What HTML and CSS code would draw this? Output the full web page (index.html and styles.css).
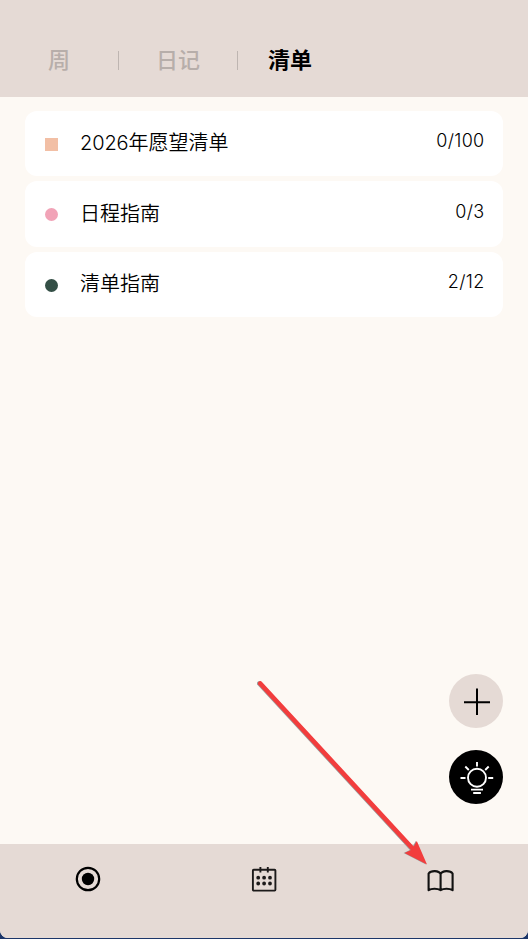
FILE: index.html
```html
<!DOCTYPE html>
<html lang="zh-CN">
<head>
<meta charset="utf-8">
<title>清单</title>
<link rel="stylesheet" href="styles.css">
</head>
<body>
<div class="app">
  <header class="tabs">
    <span class="tab tab-week">周</span>
    <i class="divider"></i>
    <span class="tab tab-diary">日记</span>
    <i class="divider"></i>
    <span class="tab tab-list active">清单</span>
  </header>
  <main class="content">
    <div class="card"><i class="mark square"></i><span class="name"><span class="year">2026</span>年愿望清单</span><span class="count">0/100</span></div>
    <div class="card"><i class="mark pink"></i><span class="name">日程指南</span><span class="count">0/3</span></div>
    <div class="card"><i class="mark green"></i><span class="name">清单指南</span><span class="count">2/12</span></div>
    <div class="actions">
      <button class="fab" aria-label="添加">
        <svg width="54" height="54" viewBox="0 0 54 54" fill="none" stroke="#000" stroke-width="2"><path d="M28 14.500v26.500M15 28.300h26"/></svg>
      </button>
      <button class="fab dark" aria-label="提示">
        <svg width="54" height="54" viewBox="0 0 54 54" fill="none" stroke="#fff" stroke-width="1.900"><circle cx="28" cy="27.700" r="9"/><path d="M28 12v4.500M16.300 16.500l3.500 3.500M39.700 16.500l-3.500 3.500M11.500 28h5M39.200 28h5M22 39.600h12M24.200 43h7.700"/></svg>
      </button>
    </div>
  </main>
  <nav class="bar">
    <a class="item"><svg width="28" height="28" viewBox="0 0 28 28"><circle cx="14" cy="14" r="11.200" fill="none" stroke="#000" stroke-width="2.200"/><circle cx="14" cy="14" r="6.200"/></svg></a>
    <a class="item"><svg width="28" height="28" viewBox="0 0 28 28" fill="none" stroke="#1c1a1a" stroke-width="1.900"><rect x="2.900" y="4.800" width="22.500" height="20.800" rx=".8"/><path d="M10.400 2v5.500M17.800 2v5.500"/><path d="M8.200 12.700h0M14.100 12.700h0M20 12.700h0M8.200 18.500h0M14.100 18.500h0M20 18.500h0" stroke-width="3.800" stroke-linecap="round"/></svg></a>
    <a class="item book"><svg width="28" height="28" viewBox="0 0 28 28" fill="none" stroke="#111" stroke-width="2.100" stroke-linecap="round" stroke-linejoin="round"><path d="M14.600 7C12.800 3.200 5 3.200 2.600 6.500V23.200C5.500 21.200 11.500 21.200 14.600 23.200C17.500 21.200 23.500 21.200 26.600 23.200V6.500C24.200 3.200 16.400 3.200 14.600 7V23.200"/></svg></a>
  </nav>
  <svg class="arrow" width="528" height="939" viewBox="0 0 528 939"><g class="arrow-shadow"><path d="M260.300 683.500L413 849" stroke="#f23d3d" stroke-width="4.600" stroke-linecap="round"/><path d="M427 864.500L404.600 853L412 849.500L416.800 841Z" fill="#f23d3d"/></g></svg>
</div>
</body>
</html>
```
FILE: styles.css
```css
* { box-sizing: border-box; }
body {
  margin: 0;
  background: #1b3569;
  font-family: Inter, "Noto Sans CJK SC", sans-serif;
  color: #000;
}
.app {
  position: relative;
  display: flex;
  flex-direction: column;
  height: 938px;
  overflow: hidden;
  background: #fdf9f4;
  border-radius: 0 0 8px 8px;
}
.tabs {
  display: flex;
  align-items: center;
  height: 97px;
  padding: 24px 48px 0;
  background: #e5dad5;
}
.tab {
  margin-top: -6px;
  font: 500 22px/32px "Noto Sans CJK SC", sans-serif;
  color: #b7aeaa;
}
.tab-week { width: 70px; }
.tab-diary { width: 118px; padding-left: 37px; }
.tab-list { padding-left: 30px; }
.tab.active { color: #000; font-weight: 700; }
.divider { width: 1px; height: 19px; background: #beb5b1; }
.content {
  position: relative;
  flex: 1;
  display: flex;
  flex-direction: column;
  gap: 4.8px;
  padding: 13.700px 25px;
}
.card {
  display: flex;
  align-items: center;
  height: 65.7px;
  padding: 0 18.500px 2px 20px;
  background: #fff;
  border-radius: 12px;
}
.mark { width: 13px; height: 13px; margin-top: 3.400px; border-radius: 50%; }
.square { background: #f2bfa5; border-radius: 0; }
.pink { background: #f1a3b7; }
.green { background: #344f46; }
.name {
  margin-left: 22px;
  flex: 1;
  margin-top: -0.600px;
  font: 350 20px/30px "Noto Sans CJK SC", sans-serif;
}
.year { font-family: Inter, sans-serif; font-size: 20px; font-weight: 300; letter-spacing: -0.1px; }
.count { font-size: 18px; line-height: 26px; font-weight: 350; letter-spacing: 0.3px; margin-top: -2.200px; }
.actions {
  position: absolute;
  right: 25px;
  bottom: 40px;
  display: grid;
  gap: 22px;
}
.fab {
  width: 54px;
  height: 54px;
  padding: 0;
  border: 0;
  border-radius: 50%;
  background: #e5dad5;
}
.fab svg { display: block; }
.fab.dark { background: #000; }
.bar {
  display: grid;
  grid-template-columns: repeat(3, 1fr);
  height: 94px;
  padding-top: 21px;
  background: #e5dad5;
}
.item { display: flex; justify-content: center; align-items: flex-start; }
.item svg { display: block; }
.book { padding-top: 2px; }
.arrow { position: absolute; left: 0; top: 0; pointer-events: none; }
.arrow-shadow { filter: drop-shadow(-0.4px 0.6px 0.3px #999); }
```
